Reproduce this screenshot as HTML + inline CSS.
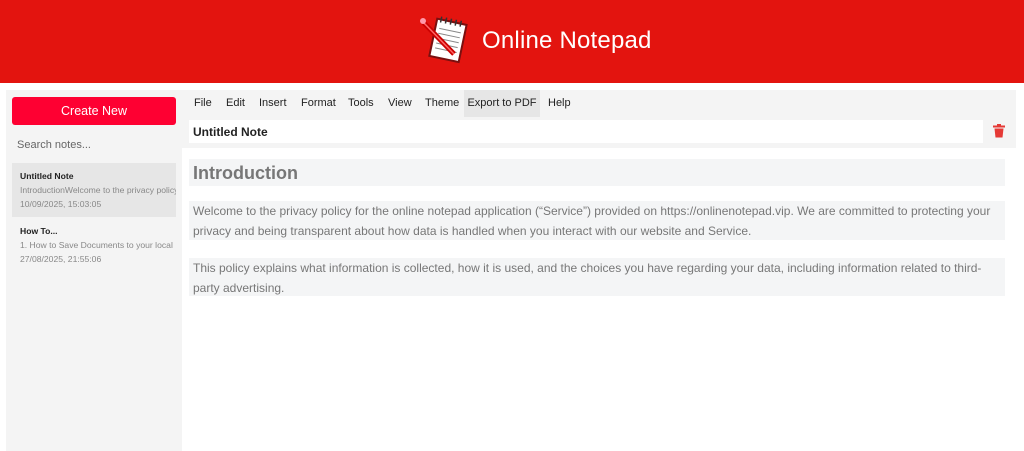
<!DOCTYPE html>
<html><head><style>
*{margin:0;padding:0;box-sizing:border-box}
body{width:1024px;height:451px;overflow:hidden;background:#fff;font-family:"Liberation Sans",sans-serif;position:relative}
.hdr{position:absolute;left:0;top:0;width:1024px;height:83px;background:#e3140f}
.ttl{position:absolute;left:482px;top:27px;color:#fff;font-size:24px;letter-spacing:0.2px}
.side{position:absolute;left:6px;top:90px;width:176px;height:361px;background:#f4f4f4}
.btn{position:absolute;left:12px;top:97px;width:164px;height:28px;background:#fe0032;border-radius:3px;color:#fff;font-size:12.5px;text-align:center;line-height:28px}
.srch{position:absolute;left:17px;top:139px;font-size:11px;color:#666}
.note{position:absolute;left:12px;width:164px;height:54px;padding:6px 8px;font-size:8.6px;line-height:14px;overflow:hidden;white-space:nowrap}
.note b{color:#222}
.note span{color:#888;display:block}
.tb{position:absolute;left:182px;top:90px;width:834px;height:58px;background:#f4f4f4}
.menu{position:absolute;top:90px;height:27px;line-height:27px;font-size:11px;color:#222}
.ti{position:absolute;left:189px;top:120px;width:794px;height:23px;background:#fff;font-size:12px;font-weight:bold;padding-left:4px;line-height:24px;color:#222}
.blk{position:absolute;left:189px;width:816px;background:#f4f5f6;color:#777;padding-left:4px}
</style></head><body>
<div class="hdr"></div>
<svg style="position:absolute;left:416px;top:14px" width="58" height="52" viewBox="0 0 58 52">
<g transform="rotate(12 30 26)"><rect x="17" y="7" width="30" height="38" fill="#fff" stroke="#7a1010" stroke-width="2"/>
<g stroke="#888" stroke-width="1"><line x1="21" y1="16" x2="43" y2="16"/><line x1="21" y1="21" x2="43" y2="21"/><line x1="21" y1="26" x2="43" y2="26"/><line x1="21" y1="31" x2="43" y2="31"/><line x1="21" y1="36" x2="43" y2="36"/></g>
<g stroke="#333" stroke-width="1.5"><line x1="21" y1="4" x2="21" y2="10"/><line x1="26" y1="4" x2="26" y2="10"/><line x1="31" y1="4" x2="31" y2="10"/><line x1="36" y1="4" x2="36" y2="10"/><line x1="41" y1="4" x2="41" y2="10"/></g></g>
<line x1="7" y1="8" x2="38" y2="40" stroke="#c00" stroke-width="5"/><line x1="7" y1="8" x2="38" y2="40" stroke="#f66" stroke-width="1.5"/>
<circle cx="7" cy="7" r="3" fill="#f9a"/>
</svg>
<div class="ttl">Online Notepad</div>
<div class="side"></div>
<div class="btn">Create New</div>
<div class="srch">Search notes...</div>
<div class="note" style="top:163px;background:#e6e6e6"><b>Untitled Note</b><span>IntroductionWelcome to the privacy policy</span><span>10/09/2025, 15:03:05</span></div>
<div class="note" style="top:218px"><b>How To...</b><span>1. How to Save Documents to your local</span><span>27/08/2025, 21:55:06</span></div>
<div class="tb"></div>
<div class="menu" style="left:194px">File</div>
<div class="menu" style="left:226px">Edit</div>
<div class="menu" style="left:259px">Insert</div>
<div class="menu" style="left:301px">Format</div>
<div class="menu" style="left:348px">Tools</div>
<div class="menu" style="left:388px">View</div>
<div class="menu" style="left:425px">Theme</div>
<div class="menu" style="left:464px;width:76px;background:#e6e6e6;text-align:center">Export to PDF</div>
<div class="menu" style="left:548px">Help</div>
<div class="ti">Untitled Note</div>
<svg style="position:absolute;left:993px;top:124px" width="12" height="14" viewBox="0 0 12 14"><rect x="0" y="1.5" width="12" height="2" fill="#e53935"/><rect x="4" y="0" width="4" height="2" fill="#e53935"/><path d="M1.5 4.5h9l-1 9h-7z" fill="#e53935"/></svg>
<div class="blk" style="top:159px;height:27px;font-size:18px;font-weight:bold;line-height:28px">Introduction</div>
<div class="blk" style="top:201px;height:39px;font-size:12px;line-height:20px;padding-right:4px">Welcome to the privacy policy for the online notepad application (“Service”) provided on https://onlinenotepad.vip. We are committed to protecting your privacy and being transparent about how data is handled when you interact with our website and Service.</div>
<div class="blk" style="top:258px;height:38px;font-size:12px;line-height:20px;padding-right:4px">This policy explains what information is collected, how it is used, and the choices you have regarding your data, including information related to third-party advertising.</div>
</body></html>
